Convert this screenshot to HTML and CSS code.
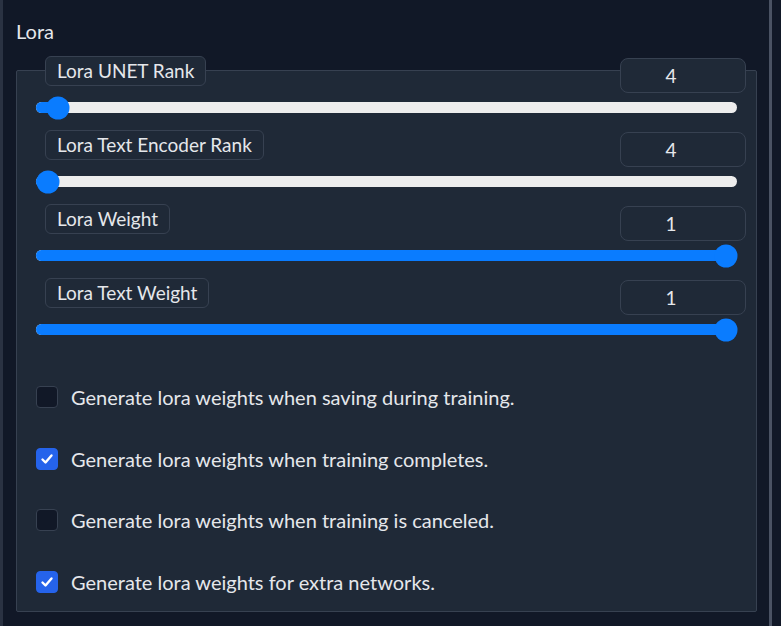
FILE: index.html
```html
<!DOCTYPE html>
<html lang="en">
<head>
<meta charset="utf-8">
<title>Lora</title>
<link rel="stylesheet" href="styles.css">
</head>
<body>
<div class="frame">
  <div class="title">Lora</div>
  <div class="panel">
    <div class="sliders">
      <div class="srow">
        <div class="shead"><span class="chip">Lora UNET Rank</span><span class="num">4</span></div>
        <div class="track"><div class="fill" style="width:3.1%"></div><div class="thumb" style="left:3.1%"></div></div>
      </div>
      <div class="srow">
        <div class="shead"><span class="chip">Lora Text Encoder Rank</span><span class="num">4</span></div>
        <div class="track"><div class="fill" style="width:1.7%"></div><div class="thumb" style="left:1.7%"></div></div>
      </div>
      <div class="srow">
        <div class="shead"><span class="chip">Lora Weight</span><span class="num">1</span></div>
        <div class="track"><div class="fill" style="width:98.4%"></div><div class="thumb" style="left:98.4%"></div></div>
      </div>
      <div class="srow">
        <div class="shead"><span class="chip">Lora Text Weight</span><span class="num">1</span></div>
        <div class="track"><div class="fill" style="width:98.4%"></div><div class="thumb" style="left:98.4%"></div></div>
      </div>
    </div>
    <div class="checks">
      <label class="crow"><span class="box"></span><span>Generate lora weights when saving during training.</span></label>
      <label class="crow"><span class="box on"><svg viewBox="0 0 16 16" width="16" height="16"><path d="M3.5 8.5 L6.5 11.5 L12.5 4.5" fill="none" stroke="#fff" stroke-width="2.4" stroke-linecap="round" stroke-linejoin="round"/></svg></span><span>Generate lora weights when training completes.</span></label>
      <label class="crow"><span class="box"></span><span>Generate lora weights when training is canceled.</span></label>
      <label class="crow"><span class="box on"><svg viewBox="0 0 16 16" width="16" height="16"><path d="M3.5 8.5 L6.5 11.5 L12.5 4.5" fill="none" stroke="#fff" stroke-width="2.4" stroke-linecap="round" stroke-linejoin="round"/></svg></span><span>Generate lora weights for extra networks.</span></label>
    </div>
  </div>
</div>
</body>
</html>
```

FILE: styles.css
```css
html, body {
  margin: 0;
  padding: 0;
  background: #111827;
}
body {
  font-family: Lato, "Noto Sans", sans-serif;
  color: #e5e7eb;
  width: 781px;
  height: 626px;
  overflow: hidden;
}
.frame {
  box-sizing: border-box;
  width: 772px;
  height: 626px;
  border-left: 3px solid #2a3242;
  border-right: 3px solid #4a5263;
  padding-left: 13px;
  padding-top: 19px;
}
.title {
  font-size: 20px;
  line-height: 24px;
  height: 24px;
  margin-bottom: 27px;
}
.panel {
  box-sizing: border-box;
  width: 741px;
  background: #1f2937;
  border: 1px solid #374151;
  border-radius: 2px;
  padding: 0 19px 18.5px 19px;
}
.sliders {
  margin-top: -15px;
}
.srow {
  padding-bottom: 17px;
}
.shead {
  display: flex;
  justify-content: space-between;
  align-items: flex-start;
  height: 37px;
  margin: 0 -9px 9px 9px;
}
.chip {
  box-sizing: border-box;
  height: 30px;
  line-height: 28px;
  padding: 0 11px;
  font-size: 19px;
  background: #1f2937;
  border: 1px solid #374151;
  border-radius: 6px;
}
.num {
  box-sizing: border-box;
  margin-top: 2px;
  width: 126px;
  height: 35px;
  line-height: 33px;
  border: 1px solid #374151;
  border-radius: 8px;
  background: #1f2937;
  text-align: center;
  padding-right: 24px;
  font-size: 19px;
}
.track {
  position: relative;
  height: 11px;
  border-radius: 6px;
  background: #ededed;
}
.fill {
  height: 100%;
  border-radius: 6px;
  background: #0a7cff;
}
.thumb {
  position: absolute;
  top: 50%;
  width: 23px;
  height: 23px;
  border-radius: 50%;
  background: #0a7cff;
  transform: translate(-50%, -50%);
}
.checks {
  margin-top: 34px;
  display: flex;
  flex-direction: column;
  gap: 39.5px;
}
.crow {
  display: flex;
  align-items: center;
  height: 22px;
  gap: 13px;
  font-size: 20px;
}
.box {
  box-sizing: border-box;
  width: 22px;
  height: 22px;
  border-radius: 4px;
  background: #111827;
  border: 1px solid #374151;
  display: flex;
  align-items: center;
  justify-content: center;
}
.box.on {
  background: #2563eb;
  border-color: #2563eb;
}
```
